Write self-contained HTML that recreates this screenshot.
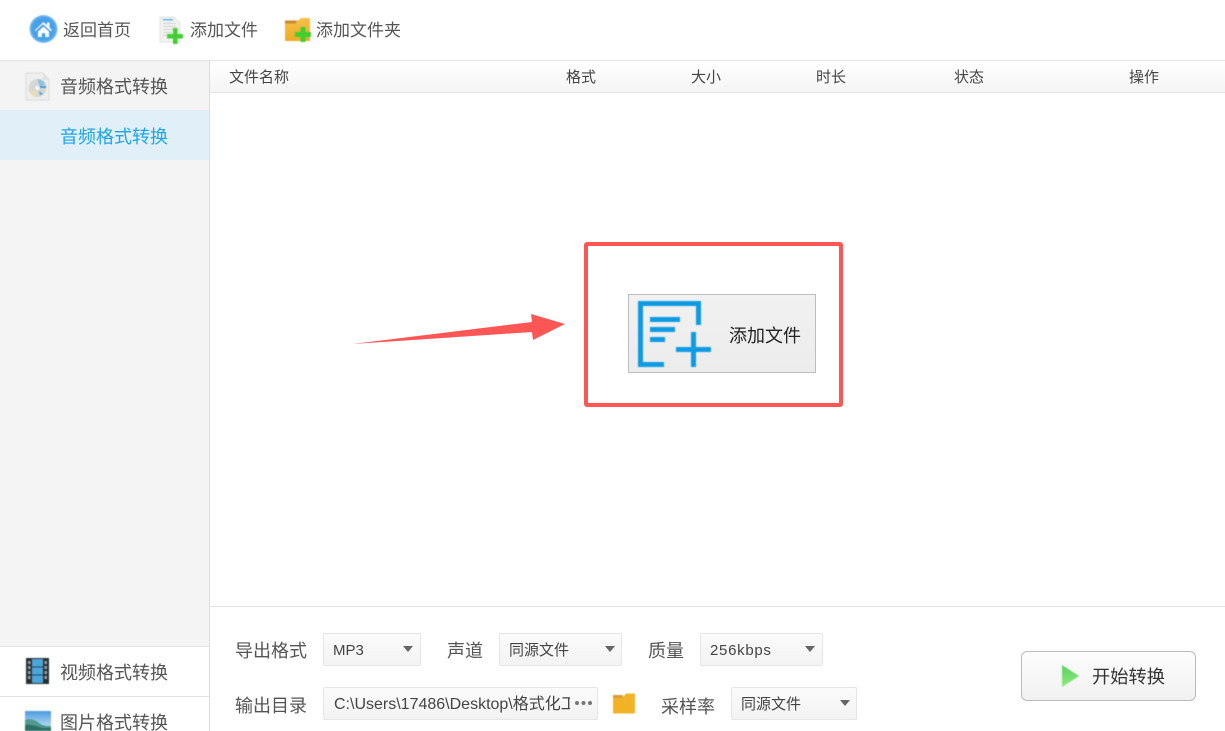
<!DOCTYPE html>
<html lang="zh">
<head>
<meta charset="utf-8">
<title>音频格式转换</title>
<style>
html,body{margin:0;padding:0;background:#fff}
#app{position:relative;width:1225px;height:731px;overflow:hidden;background:#fff;font-family:"Liberation Sans","Noto Sans CJK SC",sans-serif;color:#444}
#app>*{position:absolute}
.t{white-space:nowrap;line-height:24px;height:24px}
.f17{font-size:17px;color:#555}
.f18{font-size:18px;color:#555}
.h{font-size:15px;color:#444;line-height:20px;height:20px}
.sel{box-sizing:border-box;height:33px;border:1px solid #e6e6e6;border-radius:2px;background:linear-gradient(#fbfbfb,#f3f3f3);font-size:15px;line-height:33px;color:#444;padding-left:9px;white-space:nowrap;overflow:hidden}
.arr{width:0;height:0;border-left:5px solid transparent;border-right:5px solid transparent;border-top:6px solid #666}
svg{display:block}
.soft{filter:blur(.4px)}
</style>
</head>
<body>
<div id="app">
  <!-- sidebar -->
  <div style="left:0;top:61px;width:209px;height:670px;background:#f4f4f4"></div>
  <div style="left:0;top:110px;width:209px;height:50px;background:#e1f0f8"></div>
  <div style="left:0;top:647px;width:209px;height:84px;background:#fff"></div>
  <div style="left:0;top:646px;width:209px;height:1px;background:#e2e2e2"></div>
  <div style="left:0;top:696px;width:209px;height:1px;background:#e2e2e2"></div>
  <div style="left:209px;top:61px;width:1px;height:670px;background:#dcdcdc"></div>
  <div style="left:0;top:60px;width:1225px;height:1px;background:#e4e4e4"></div>

  <!-- table header -->
  <div style="left:210px;top:61px;width:1015px;height:31px;background:linear-gradient(#fff,#f5f5f5)"></div>
  <div style="left:210px;top:92px;width:1015px;height:1px;background:#e4e4e4"></div>
  <div class="t h" style="left:229px;top:68px">文件名称</div>
  <div class="t h" style="left:566px;top:68px">格式</div>
  <div class="t h" style="left:691px;top:68px">大小</div>
  <div class="t h" style="left:816px;top:68px">时长</div>
  <div class="t h" style="left:954px;top:68px">状态</div>
  <div class="t h" style="left:1129px;top:68px">操作</div>

  <!-- toolbar -->
  <svg class="soft" style="left:29px;top:14px" width="29" height="30" viewBox="0 0 29 30">
    <defs><radialGradient id="hb" cx=".5" cy=".5" r=".55"><stop offset="0" stop-color="#3c95e2"/><stop offset=".75" stop-color="#4ba3ea"/><stop offset="1" stop-color="#a9d6f6"/></radialGradient></defs>
    <circle cx="14.500" cy="15" r="14" fill="url(#hb)"/>
    <path d="M6 16 14.500 8 18 11.200V8.500h2.500v5l2.500 2.500-1.200 1.200-7.800-7-7.800 7z" fill="#fff"/>
    <path d="M9 17.500 14.500 12.500 20 17.500V23h-3.800v-3.800h-3.400V23H9z" fill="#fff"/>
  </svg>
  <div class="t f17" style="left:63px;top:19px">返回首页</div>

  <svg class="soft" style="left:159px;top:16px" width="26" height="29" viewBox="0 0 26 29">
    <path d="M1 1h14l6 6v19H1z" fill="#f3f3f1" stroke="#e2e2e2"/>
    <path d="M4 3h10v1.500H4z" fill="#59b7ea"/>
    <path d="M4 7h13v1H4zM4 10h13v1H4zM4 13h13v1H4zM4 16h9v1H4zM4 19h3v1H4z" fill="#cfcfcf"/>
    <path d="M14 12h4.500v6H24v4.500h-5.500V28H14v-5.500H8V18h6z" fill="#3fd02f"/>
  </svg>
  <div class="t f17" style="left:190px;top:19px">添加文件</div>

  <svg class="soft" style="left:284px;top:17px" width="28" height="26" viewBox="0 0 28 26">
    <defs><linearGradient id="fo" x1="0" y1="0" x2="0" y2="1"><stop offset="0" stop-color="#f7c04a"/><stop offset="1" stop-color="#eeab25"/></linearGradient></defs>
    <path d="M1 3.500h13L17 1h9v23H1z" fill="url(#fo)"/>
    <path d="M1 3.500h12L11.500 6.500H1z" fill="#c98a2e"/>
    <path d="M16.500 10h5v5H27v5h-5.500v5h-5v-5H11v-5h5.500z" fill="#3fd02f"/>
  </svg>
  <div class="t f17" style="left:316px;top:19px">添加文件夹</div>

  <!-- sidebar items -->
  <svg class="soft" style="left:25px;top:72px" width="26" height="30" viewBox="0 0 26 30">
    <path d="M1 1h17l6 6.500V28H1z" fill="#efefed" stroke="#dcdcdc"/>
    <path d="M18 1v7h6z" fill="#e0e0de"/>
    <circle cx="12.500" cy="16" r="9" fill="#d6d6d6"/>
    <path d="M12.500 7a9 9 0 0 1 8 5l-6 3z" fill="#8fc4dc"/>
    <path d="M4.500 20a9 9 0 0 0 6 5l1.500-7z" fill="#e8dcb0"/>
    <path d="M15 14h6v2h-6z" fill="#4a9ad0"/>
    <path d="M14 19l4 3-3 1z" fill="#4a9ad0"/>
    <circle cx="12.500" cy="16" r="2.200" fill="#f6f6f6"/>
  </svg>
  <div class="t f18" style="left:60px;top:75px">音频格式转换</div>
  <div class="t f18" style="left:60px;top:125px;color:#1da4e8">音频格式转换</div>

  <svg class="soft" style="left:26px;top:658px" width="23" height="26" viewBox="0 0 23 26">
    <rect width="23" height="26" fill="#2a3032"/>
    <rect x="6" y="1" width="11" height="24" fill="#4ba6da"/>
    <path d="M6 8.500h11v1H6zM6 16.500h11v1H6z" fill="#1c4660"/>
    <path d="M2 3h2.500v3H2zM2 8h2.500v3H2zM2 13h2.500v3H2zM2 18h2.500v3H2zM18.500 3H21v3h-2.500zM18.500 8H21v3h-2.500zM18.500 13H21v3h-2.500zM18.500 18H21v3h-2.500z" fill="#9aa4a8"/>
  </svg>
  <div class="t f18" style="left:60px;top:661px">视频格式转换</div>

  <svg class="soft" style="left:25px;top:711px" width="26" height="20" viewBox="0 0 26 20">
    <defs><linearGradient id="sk" x1="0" y1="0" x2="0" y2="1"><stop offset="0" stop-color="#4c9be0"/><stop offset="1" stop-color="#d4ecf6"/></linearGradient></defs>
    <rect width="26" height="20" fill="url(#sk)"/>
    <path d="M0 9c6-2 10 0 14 3s8 3 12 3v5H0z" fill="#4f9a8f"/>
    <path d="M0 14c6-1 12 1 17 3l9 0v3H0z" fill="#2f7066"/>
  </svg>
  <div class="t f18" style="left:60px;top:711px">图片格式转换</div>

  <!-- red annotation -->
  <div style="left:584px;top:242px;width:259px;height:165px;box-sizing:border-box;border:4.500px solid #fe5555;border-radius:3px"></div>
  <svg style="left:350px;top:312px" width="220" height="36" viewBox="0 0 220 36">
    <path d="M2 32 182 10 181 2 215 12 183 28 182 20z" fill="#fe5555"/>
  </svg>

  <!-- add file button -->
  <div style="left:628px;top:294px;width:188px;height:79px;box-sizing:border-box;border:1px solid #bdbdbd;background:linear-gradient(#f1f1f1,#ececec)"></div>
  <svg class="soft" style="left:638px;top:299px" width="75" height="70" viewBox="0 0 75 70">
    <path d="M0 2h63v24h-5V7H5v56h21v5H0z" fill="#0f9be3"/>
    <path d="M12 18h30v5H12zM12 28h25v5H12zM12 38h15v5H12z" fill="#0f9be3"/>
    <path d="M53 33h5v15h15v5H58v15h-5V53H38v-5h15z" fill="#0f9be3"/>
  </svg>
  <div class="t" style="left:729px;top:324px;font-size:18px;color:#222">添加文件</div>

  <!-- bottom panel -->
  <div style="left:210px;top:606px;width:1015px;height:1px;background:#e2e2e2"></div>

  <div class="t f18" style="left:235px;top:639px">导出格式</div>
  <div class="sel" style="left:323px;top:633px;width:98px">MP3</div>
  <div class="arr" style="left:403px;top:646px"></div>

  <div class="t f18" style="left:447px;top:639px">声道</div>
  <div class="sel" style="left:499px;top:633px;width:123px">同源文件</div>
  <div class="arr" style="left:605px;top:646px"></div>

  <div class="t f18" style="left:648px;top:639px">质量</div>
  <div class="sel" style="left:700px;top:633px;width:123px;letter-spacing:.7px">256kbps</div>
  <div class="arr" style="left:805px;top:646px"></div>

  <div class="t f18" style="left:235px;top:694px">输出目录</div>
  <div class="sel" style="left:323px;top:687px;width:275px;padding-left:10px;font-size:16px;line-height:33px"><span style="display:block;width:236px;overflow:hidden">C:\Users\17486\Desktop\格式化工厂</span></div>
  <svg style="left:574px;top:700px" width="20" height="6" viewBox="0 0 20 6"><circle cx="3" cy="3" r="2" fill="#777"/><circle cx="9.500" cy="3" r="2" fill="#777"/><circle cx="16" cy="3" r="2" fill="#777"/></svg>

  <svg class="soft" style="left:612px;top:693px" width="24" height="21" viewBox="0 0 24 21">
    <path d="M1 3h11l2-2.500h9V20.500H1z" fill="#f0b325"/>
    <path d="M1 2h10l-2 3H1z" fill="#d99a36"/>
  </svg>

  <div class="t f18" style="left:661px;top:695px">采样率</div>
  <div class="sel" style="left:731px;top:687px;width:126px">同源文件</div>
  <div class="arr" style="left:840px;top:700px"></div>

  <!-- start button -->
  <div style="left:1021px;top:651px;width:175px;height:50px;box-sizing:border-box;border:1px solid #bcbcbc;border-radius:6px;background:linear-gradient(#fdfdfd,#f1f1f1)"></div>
  <svg class="soft" style="left:1061px;top:664px" width="20" height="24" viewBox="0 0 20 24">
    <defs><linearGradient id="pl" x1="0" y1="0" x2="0" y2="1"><stop offset="0" stop-color="#5ed060"/><stop offset="1" stop-color="#8aec7a"/></linearGradient></defs>
    <path d="M1 1 18 12 1 23z" fill="url(#pl)"/>
  </svg>
  <div class="t" style="left:1092px;top:665px;font-size:18.250px;color:#333">开始转换</div>
</div>
</body>
</html>
